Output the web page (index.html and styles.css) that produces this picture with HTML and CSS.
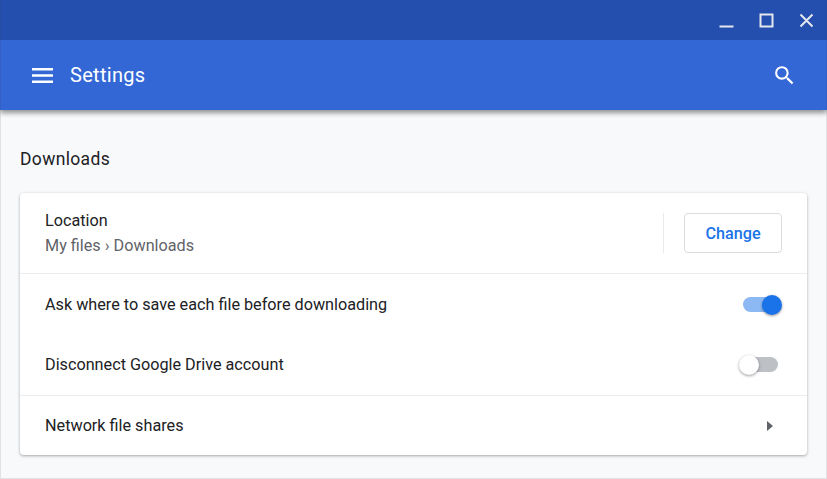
FILE: index.html
```html
<!DOCTYPE html>
<html lang="en">
<head><meta charset="utf-8"><title>Settings</title><link rel="stylesheet" href="styles.css"></head>
<body>
<div class="window">
  <div class="titlebar">
    <svg class="window-controls" width="108" height="40" viewBox="-1 0 108 40"><path d="M-.5 26.500h14M40.500 14.500h12v12h-12zM80.500 14.500l12 12M92.500 14.500l-12 12"/></svg>
  </div>
  <header class="toolbar">
    <svg class="menu" width="21" height="16" viewBox="0 0 21 16"><path d="M0 2.300h21M0 8.500h21M0 14.700h21"/></svg>
    <h1>Settings</h1>
    <svg class="search" width="25" height="25" viewBox="0 0 24 24"><path d="M15.5 14h-.79l-.28-.27A6.471 6.471 0 0 0 16 9.500 6.500 6.500 0 1 0 9.500 16c1.610 0 3.090-.590 4.230-1.570l.270.280v.790l5 4.990L20.490 19l-4.990-5zm-6 0C7.010 14 5 11.990 5 9.500S7.010 5 9.500 5 14 7.010 14 9.500 11.990 14 9.500 14z"/></svg>
  </header>
  <main>
    <h2>Downloads</h2>
    <section class="card">
      <div class="row location">
        <div class="label">Location<div class="secondary">My files › Downloads</div></div>
        <div class="action"><button>Change</button></div>
      </div>
      <div class="row separated ask"><span>Ask where to save each file before downloading</span><span class="toggle on"></span></div>
      <div class="row drive"><span>Disconnect Google Drive account</span><span class="toggle"></span></div>
      <div class="row separated network"><span>Network file shares</span><span class="arrow"></span></div>
    </section>
  </main>
</div>
</body>
</html>
```
FILE: styles.css
```css
* { box-sizing: border-box; }
body { margin: 0; font: 16.22px/24px Roboto, sans-serif; color: #202124; }
.window { position: relative; height: 479px; background: #f8f9fb; overflow: hidden; }
.window::after { content: ""; position: absolute; inset: 0; border: 1px solid rgba(60,64,67,.12); border-top: 0; }
.titlebar { height: 40px; background: #254fae; display: flex; justify-content: flex-end; }
.window-controls { fill: none; stroke: #e4e8ee; stroke-width: 2; }
.toolbar { height: 70px; background: #3367d6; color: #fff; display: flex; align-items: center; padding: 0 30px 0 32px; box-shadow: 0 3px 5px rgba(0,0,0,.42); clip-path: inset(0 0 -8px 0); }
.menu { stroke: #fff; stroke-width: 2.5; }
h1 { margin: 0 auto 0 17px; font-size: 20px; font-weight: 400; letter-spacing: .3px; }
.search { fill: #fff; margin-top: 1px; }
main { padding: 37px 20px 0; }
h2 { margin: 0 0 22px; font-size: 17.5px; line-height: 24px; font-weight: 400; letter-spacing: .35px; }
.card { height: 262px; background: #fff; border-radius: 4px; box-shadow: 0 1px 3px rgba(60,64,67,.45); }
.row { display: flex; align-items: center; justify-content: space-between; padding: 0 25px; height: 60px; }
.location { height: 80px; }
.label { line-height: 25px; }
.secondary { color: #5f6368; }
.separated { border-top: 1px solid #ebecee; height: 61px; }
.ask { height: 62px; }
.action { height: 40px; border-left: 1px solid #e8eaed; padding-left: 20px; }
button { display: block; width: 98px; height: 40px; padding: 0; border: 1px solid #dadce0; border-radius: 4px; background: #fff; color: #1a73e8; font: 500 16.22px Roboto, sans-serif; }
.toggle { position: relative; width: 35px; height: 15px; margin: -1px 4px 0 0; border-radius: 8px; background: #bdc1c6; }
.toggle::after { content: ""; position: absolute; width: 20px; height: 20px; top: -2px; left: -4px; border-radius: 50%; background: #fff; box-shadow: 0 1px 3px rgba(0,0,0,.4); }
.toggle.on { background: #8cb9f4; }
.toggle.on::after { left: 18.5px; background: #1a73e8; }
.arrow { border: 5.5px solid transparent; border-left: 6px solid #5f6368; border-right: 0; margin-right: 9px; }
```
